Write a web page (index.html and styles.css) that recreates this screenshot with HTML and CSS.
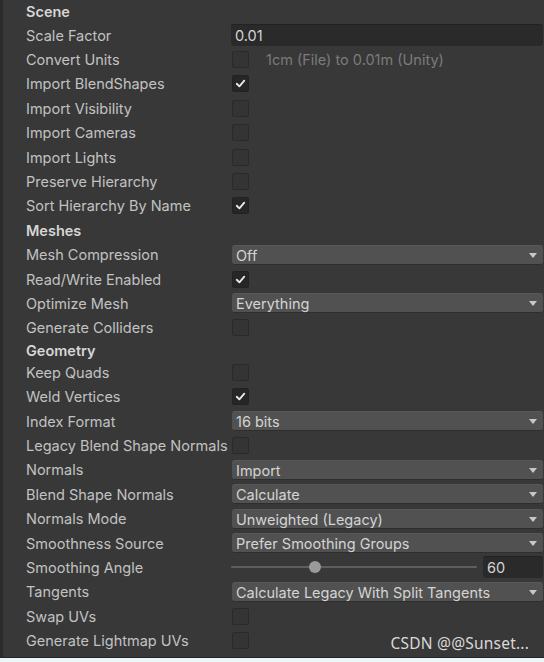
FILE: index.html
```html
<!DOCTYPE html>
<html>
<head>
<meta charset="utf-8">
<link rel="stylesheet" href="styles.css">
</head>
<body>
<div class="panel">
  <div class="row header first">Scene</div>
  <div class="row"><span class="label">Scale Factor</span><div class="ctrl"><div class="field">0.01</div></div></div>
  <div class="row"><span class="label">Convert Units</span><div class="ctrl"><span class="cb"></span><span class="hint">1cm (File) to 0.01m (Unity)</span></div></div>
  <div class="row"><span class="label">Import BlendShapes</span><div class="ctrl"><span class="cb on"><svg viewBox="0 0 16 16"><path d="M4 8.3 L6.8 11 L12 5"/></svg></span></div></div>
  <div class="row"><span class="label">Import Visibility</span><div class="ctrl"><span class="cb"></span></div></div>
  <div class="row"><span class="label">Import Cameras</span><div class="ctrl"><span class="cb"></span></div></div>
  <div class="row"><span class="label">Import Lights</span><div class="ctrl"><span class="cb"></span></div></div>
  <div class="row"><span class="label">Preserve Hierarchy</span><div class="ctrl"><span class="cb"></span></div></div>
  <div class="row"><span class="label">Sort Hierarchy By Name</span><div class="ctrl"><span class="cb on"><svg viewBox="0 0 16 16"><path d="M4 8.3 L6.8 11 L12 5"/></svg></span></div></div>
  <div class="row header">Meshes</div>
  <div class="row"><span class="label">Mesh Compression</span><div class="ctrl"><div class="dd">Off<span class="arrow"></span></div></div></div>
  <div class="row"><span class="label">Read/Write Enabled</span><div class="ctrl"><span class="cb on"><svg viewBox="0 0 16 16"><path d="M4 8.3 L6.8 11 L12 5"/></svg></span></div></div>
  <div class="row"><span class="label">Optimize Mesh</span><div class="ctrl"><div class="dd">Everything<span class="arrow"></span></div></div></div>
  <div class="row"><span class="label">Generate Colliders</span><div class="ctrl"><span class="cb"></span></div></div>
  <div class="row header short">Geometry</div>
  <div class="row"><span class="label">Keep Quads</span><div class="ctrl"><span class="cb"></span></div></div>
  <div class="row"><span class="label">Weld Vertices</span><div class="ctrl"><span class="cb on"><svg viewBox="0 0 16 16"><path d="M4 8.3 L6.8 11 L12 5"/></svg></span></div></div>
  <div class="row"><span class="label">Index Format</span><div class="ctrl"><div class="dd">16 bits<span class="arrow"></span></div></div></div>
  <div class="row"><span class="label">Legacy Blend Shape Normals</span><div class="ctrl"><span class="cb"></span></div></div>
  <div class="row"><span class="label">Normals</span><div class="ctrl"><div class="dd">Import<span class="arrow"></span></div></div></div>
  <div class="row"><span class="label">Blend Shape Normals</span><div class="ctrl"><div class="dd">Calculate<span class="arrow"></span></div></div></div>
  <div class="row"><span class="label">Normals Mode</span><div class="ctrl"><div class="dd">Unweighted (Legacy)<span class="arrow"></span></div></div></div>
  <div class="row"><span class="label">Smoothness Source</span><div class="ctrl"><div class="dd">Prefer Smoothing Groups<span class="arrow"></span></div></div></div>
  <div class="row"><span class="label">Smoothing Angle</span><div class="ctrl slider-ctrl"><div class="track"><span class="thumb"></span></div><div class="field num">60</div></div></div>
  <div class="row"><span class="label">Tangents</span><div class="ctrl"><div class="dd">Calculate Legacy With Split Tangents<span class="arrow"></span></div></div></div>
  <div class="row"><span class="label">Swap UVs</span><div class="ctrl"><span class="cb"></span></div></div>
  <div class="row"><span class="label">Generate Lightmap UVs</span><div class="ctrl"><span class="cb"></span></div></div>
  <div class="watermark">CSDN @@Sunset...</div>
</div>
<div class="bottom"></div>
</body>
</html>
```

FILE: styles.css
```css
html, body {
  margin: 0;
  padding: 0;
  background: #383838;
}
.panel {
  position: relative;
  height: 658px;
  box-sizing: border-box;
  background: #383838;
  border-left: 3px solid #2b2b2b;
  border-bottom: 1px solid #252525;
  font-family: Inter, "Noto Sans", sans-serif;
  font-size: 14.5px;
  color: #c2c2c2;
}
.bottom {
  height: 4px;
  background: #e9f7f7;
}
.row {
  display: flex;
  align-items: center;
  height: 24.4px;
  white-space: nowrap;
}
.header {
  padding-left: 23px;
  font-weight: 600;
  color: #d6d6d6;
}
.header.first { height: 23px; }
.header.short { height: 20px; }
.label {
  width: 205px;
  flex: none;
  padding-left: 23px;
  box-sizing: content-box;
  overflow: visible;
}
.ctrl {
  flex: 1;
  display: flex;
  align-items: center;
  padding-right: 1px;
  min-width: 0;
}
.field {
  flex: 1;
  height: 21px;
  line-height: 21px;
  background: #2a2a2a;
  border-top: 1px solid #222;
  border-radius: 3px;
  padding-left: 4px;
  color: #d4d4d4;
}
.cb {
  width: 15px;
  height: 15px;
  margin-left: 1px;
  background: #343434;
  border: 1px solid #2a2a2a;
  border-radius: 2px;
  display: flex;
  align-items: center;
  justify-content: center;
  flex: none;
}
.cb.on {
  background: #262626;
  border-color: #222;
}
.cb svg {
  width: 15px;
  height: 15px;
}
.cb svg path {
  fill: none;
  stroke: #e8e8e8;
  stroke-width: 2;
  stroke-linecap: round;
  stroke-linejoin: round;
}
.hint {
  margin-left: 17px;
  color: #7b7b7b;
}
.dd {
  flex: 1;
  position: relative;
  height: 20px;
  line-height: 20px;
  background: #515151;
  border-radius: 3px;
  border-bottom: 1px solid #2e2e2e;
  border-top: 1px solid #585858;
  box-sizing: border-box;
  padding-left: 4px;
  margin-left: 1px;
  color: #d4d4d4;
}
.arrow {
  position: absolute;
  right: 6px;
  top: 7px;
  width: 0;
  height: 0;
  border-left: 4.5px solid transparent;
  border-right: 4.5px solid transparent;
  border-top: 5px solid #c8c8c8;
}
.slider-ctrl {
  gap: 6px;
}
.track {
  position: relative;
  flex: none;
  width: 246px;
  height: 2px;
  background: #5e5e5e;
  border-radius: 1px;
}
.thumb {
  position: absolute;
  left: 78px;
  top: -5px;
  width: 12px;
  height: 12px;
  border-radius: 50%;
  background: #9a9a9a;
}
.field.num {
  flex: 1;
}
.watermark {
  position: absolute;
  right: 15px;
  bottom: 3px;
  font-family: "Noto Sans", "Liberation Sans", sans-serif;
  font-size: 15.5px;
  color: #d9d9d9;
  letter-spacing: 0.2px;
}
```
